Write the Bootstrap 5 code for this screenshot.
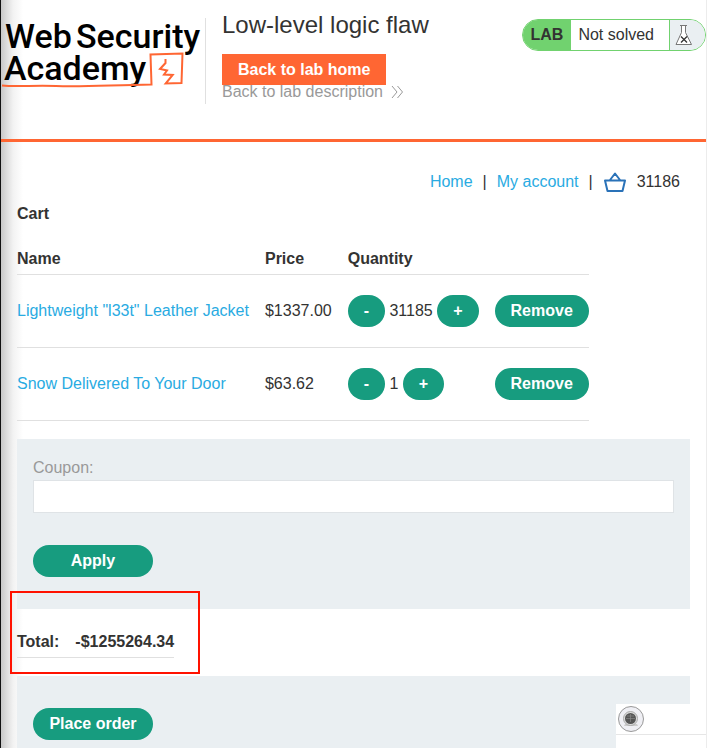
<!DOCTYPE html>
<html lang="en">
<head>
<meta charset="utf-8">
<meta name="viewport" content="width=device-width, initial-scale=1">
<title>Low-level logic flaw</title>
<link href="https://cdn.jsdelivr.net/npm/bootstrap@5.3.0/dist/css/bootstrap.min.css" rel="stylesheet">
<style>
body { font-family: "Liberation Sans", Arial, sans-serif; font-size: 16px; line-height: 20px; color: #333332; }
a { text-decoration: none; color: #29abe2; }
.page { border-left: 1px solid #111; border-right: 1px solid #ececec;
  background: linear-gradient(90deg, #c8c8c8, #dedede 6px, #f2f2f2 12px, #fff 22px) no-repeat #fff; }
.lab-header { min-height: 142px; border-bottom: 3px solid #ff6633; }
.logo-box { width: 205px; height: 86px; margin-top: 18px; border-right: 1px solid #e0e0e0; }
.lab-title { font-size: 24px; line-height: 28px; margin: 11px 0 15px; }
.lab-home { background: #ff6633; color: #fff; font-weight: 700; line-height: 21px; padding: 5px 16px; border: 0; border-radius: 0; }
.lab-home:hover { background: #e55a2b; color: #fff; }
.lab-desc { color: #999; line-height: 14px; }
.lab-status { height: 32px; margin-top: 19px; border: 1px solid #71d26f; border-radius: 16px; overflow: hidden; line-height: 30px; }
.lab-tag { background: #71d26f; font-weight: 700; width: 48px; padding-left: 7px; }
.lab-text { padding: 0 15px 0 7px; }
.lab-flask { background: #eaeff2; border-left: 1px solid #71d26f; width: 36px; }
.top-links { padding: 30px 10px 0 0; gap: 10px; }
.section-title { font-size: 16px; line-height: 20px; font-weight: 700; margin: 12px 0 23px; }
.cart-table { white-space: nowrap; margin-bottom: 18px; }
.cart-table th { padding: 2px 16px 5px 0; border-bottom: 1px solid #e0e0e0; }
.cart-table td { padding: 20px 16px 20px 0; border-bottom: 1px solid #e0e0e0; }
.cart-table tr > :last-child { padding-right: 0; }
.pill { --bs-btn-color: #fff; --bs-btn-bg: #179c7f; --bs-btn-hover-color: #fff; --bs-btn-hover-bg: #128068;
  font-size: 16px; line-height: 20px; font-weight: 700; border: 0; padding: 6px 16px; height: 32px; vertical-align: baseline; }
.pill-wide { min-width: 120px; }
.panel { background: #eaeff2; padding: 19px 16px 32px; }
.panel-order { padding: 32px 16px 8px; }
.coupon-label { color: #999; line-height: 20px; margin-bottom: 2px; }
.coupon-input { height: 33px; border: 1px solid #dfe3e6; border-radius: 0; margin-bottom: 32px; }
.total-area { padding: 21px 0 18px; }
.total-table th { padding: 2px 16px 5px 0; border-bottom: 1px solid #e0e0e0; }
.total-table th:last-child { padding-right: 0; }
.highlight { left: -7px; top: -18px; width: 190px; height: 83px; border: 2px solid #ff1200; pointer-events: none; }
.corner { width: 90px; height: 44px; right: 1px; padding: 1px 0 0 1px; background: linear-gradient(#e6e6e6, #e6e6e6) 0 30px / 100% 1px no-repeat #fff; }
.corner button { width: 28px; height: 28px; }
</style>
<script src="https://cdn.jsdelivr.net/npm/bootstrap@5.3.0/dist/js/bootstrap.bundle.min.js"></script>
</head>
<body>
<div class="page min-vh-100 d-flex flex-column">
  <header class="lab-header d-flex align-items-start">
    <a class="logo-box flex-shrink-0 me-3" href="#" aria-label="Web Security Academy">
      <svg class="overflow-visible" width="204" height="80" viewBox="0 0 204 80" font-family="Roboto, sans-serif" font-size="34" font-weight="500" fill="#000">
        <text x="4" y="30">Web</text>
        <text x="75" y="30">Security</text>
        <text x="3" y="62">Academy</text>
        <path d="M1 67.500C16 69 34 67 55 68C84 69 110 67 150.500 66.500L149.500 36.500L181.500 35.500L180.500 65L164.700 65.500L171.700 57L163 56.500L166 52.500L159 51L164.500 45V41" fill="none" stroke="#ff6633" stroke-width="2"/>
      </svg>
    </a>
    <div class="flex-grow-1">
      <h2 class="lab-title fw-normal">Low-level logic flaw</h2>
      <a class="lab-home btn d-inline-block align-top" href="#">Back to lab home</a>
      <a class="lab-desc d-flex align-items-center" href="#">Back to lab description
        <svg class="ms-2" width="13" height="14" viewBox="0 0 13 14" fill="none" stroke="#999"><path d="M1 1l5 6-5 6M6.500 1l5 6-5 6"/></svg>
      </a>
    </div>
    <div class="lab-status d-flex flex-shrink-0">
      <span class="lab-tag">LAB</span>
      <span class="lab-text">Not solved</span>
      <span class="lab-flask d-flex align-items-center ps-1">
        <svg width="20" height="24" viewBox="0 0 20 24" fill="none" stroke="#777"><path d="M6 2.500h7M7.500 3v6.500L2 21.500h15.500L11.500 9.500V3" fill="#fff"/><path d="M7 13.500l6 6M13 13.500l-6 6" stroke="#333" stroke-width="1.300"/></svg>
      </span>
    </div>
  </header>
  <main class="px-3 flex-grow-1 d-flex flex-column">
    <nav class="top-links d-flex justify-content-end align-items-center">
      <a href="#">Home</a><span>|</span><a href="#">My account</a><span>|</span>
      <a class="d-flex" href="#" aria-label="Cart"><svg width="24" height="20" viewBox="0 0 24 20" fill="none" stroke="#2a72b8" stroke-width="2" stroke-linejoin="round"><path d="M2 8.500h20l-2.500 10.500h-15zM7 8l5-6.500 5 6.500"/></svg></a>
      <span>31186</span>
    </nav>
    <h1 class="section-title">Cart</h1>
    <div>
      <table class="cart-table">
        <thead><tr><th>Name</th><th>Price</th><th>Quantity</th><th></th></tr></thead>
        <tbody>
          <tr>
            <td><a href="#">Lightweight "l33t" Leather Jacket</a></td><td>$1337.00</td>
            <td><button class="btn pill rounded-pill" type="button">-</button> 31185 <button class="btn pill rounded-pill" type="button">+</button></td>
            <td><button class="btn pill rounded-pill" type="button">Remove</button></td>
          </tr>
          <tr>
            <td><a href="#">Snow Delivered To Your Door</a></td><td>$63.62</td>
            <td><button class="btn pill rounded-pill" type="button">-</button> 1 <button class="btn pill rounded-pill" type="button">+</button></td>
            <td><button class="btn pill rounded-pill" type="button">Remove</button></td>
          </tr>
        </tbody>
      </table>
    </div>
    <form class="panel">
      <label class="coupon-label d-block" for="coupon">Coupon:</label>
      <input class="coupon-input form-control" id="coupon" type="text">
      <button class="btn pill pill-wide rounded-pill" type="button">Apply</button>
    </form>
    <div class="total-area position-relative">
      <table class="total-table"><tbody><tr><th scope="row">Total:</th><th>-$1255264.34</th></tr></tbody></table>
      <div class="highlight position-absolute"></div>
    </div>
    <form class="panel panel-order flex-grow-1">
      <button class="btn pill pill-wide rounded-pill" type="button">Place order</button>
    </form>
  </main>
</div>
<div class="corner position-fixed bottom-0">
  <button class="btn p-0 border-0 d-flex" type="button" aria-label="Record">
    <svg width="28" height="28" viewBox="0 0 28 28"><circle cx="14" cy="14" r="12.500" fill="#efeff4" stroke="#999"/><path d="M8 19h12l1 2H7z" fill="#ccc"/><circle cx="13.500" cy="13.500" r="7" fill="#ddd" stroke="#aaa"/><circle cx="13.500" cy="13.500" r="5.500" fill="#555"/><path d="M9 13.500h9M13.500 9v8M10 11h7" stroke="#888" stroke-width=".7"/></svg>
  </button>
</div>
</body>
</html>
